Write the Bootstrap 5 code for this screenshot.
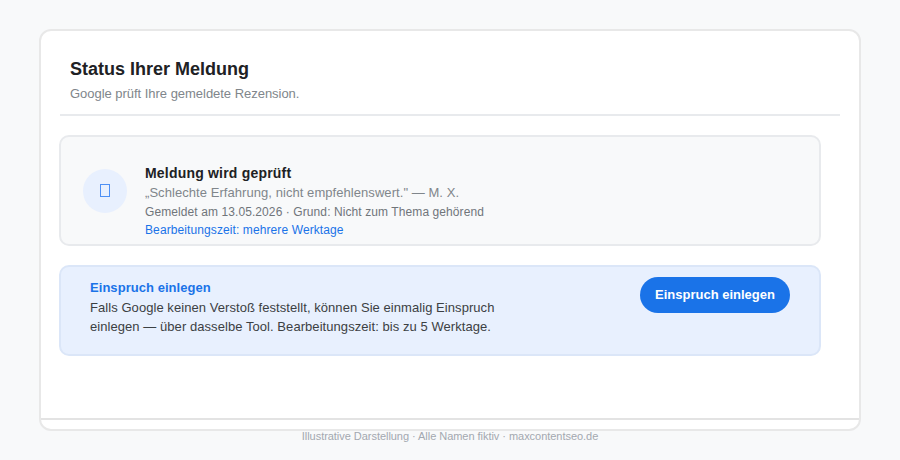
<!DOCTYPE html>
<html lang="de">
<head>
<meta charset="utf-8">
<title>Status Ihrer Meldung</title>
<link href="https://cdn.jsdelivr.net/npm/bootstrap@5.3.0/dist/css/bootstrap.min.css" rel="stylesheet">
<style>
html, body { height: 460px; overflow: hidden; }
body { background: #f8f9fa; font-family: "Liberation Sans", Arial, sans-serif; color: #202124; }
.frame { width: 822px; height: 402px; margin: 29px 0 0 39px; background: #fff; border: 2px solid #e8e8e8; border-radius: 12px; padding: 18px 18px 0 19px; }
.head { padding: 10px 10px 12px; border-bottom: 2px solid #e8eaed; height: 67px; margin-right: 1px; }
.head-title { font-size: 18px; line-height: 21px; font-weight: 700; margin: 0 0 6px; color: #202124; }
.head-sub { font-size: 13px; line-height: 15px; color: #80868b; margin: 0; letter-spacing: -.03px; }
.stack { width: 762px; margin-left: -1px; padding-top: 19px; gap: 19px; }
.state-box { height: 111px; background: #f8f9fa; border: 2px solid #e8eaed; border-radius: 10px; padding: 0 21px 0 22px; gap: 18px; }
.disc { width: 44px; height: 44px; background: #e8f0fe; border-radius: 50%; flex: none; }
.tofu { width: 10px; height: 13px; border: 1px solid #4d90f5; }
.state-text { padding-top: 27px; }
.state-title { font-size: 14px; line-height: 19px; font-weight: 700; letter-spacing: .2px; margin: 0; }
.state-quote { font-size: 13px; line-height: 19px; color: #80868b; margin: 0; letter-spacing: .06px; }
.state-meta { font-size: 12px; line-height: 19px; color: #70757a; margin: 1px 0 0; letter-spacing: .09px; }
.state-time { font-size: 12px; line-height: 18px; color: #1a73e8; margin: -1px 0 0; letter-spacing: .1px; }
.appeal { height: 91px; background: #e8f0fe; border: 2px solid #dbe6f8; border-radius: 10px; padding: 10px 29px 0; }
.appeal-title { font-size: 13px; line-height: 18px; font-weight: 700; color: #1a73e8; margin: 2px 0 1px; letter-spacing: .05px; }
.appeal-text { width: 430px; font-size: 13px; line-height: 19px; color: #3c4043; margin: 0; letter-spacing: .06px; }
.appeal-btn { width: 150px; height: 36px; padding: 0; background: #1a73e8; border: 0; color: #fff; font-size: 13px; font-weight: 700; }
.appeal-btn:hover { background: #1a73e8; color: #fff; }
.bottom-line { border-top: 2px solid #e3e3e3; margin: 0 -18px 0 -19px; }
.main-area { height: 369px; }
.note { font-size: 11px; line-height: 13px; color: #a3a8b0; text-align: center; margin-top: -1px; letter-spacing: -.04px; }
</style>
</head>
<body>
<div class="frame d-flex flex-column">
  <div class="main-area">
    <div class="head">
      <h1 class="head-title">Status Ihrer Meldung</h1>
      <p class="head-sub">Google prüft Ihre gemeldete Rezension.</p>
    </div>
    <div class="stack d-flex flex-column">
      <div class="state-box d-flex align-items-center">
        <div class="disc d-flex align-items-center justify-content-center"><span class="tofu"></span></div>
        <div class="state-text align-self-start">
          <p class="state-title">Meldung wird geprüft</p>
          <p class="state-quote">„Schlechte Erfahrung, nicht empfehlenswert." — M. X.</p>
          <p class="state-meta">Gemeldet am 13.05.2026 · Grund: Nicht zum Thema gehörend</p>
          <p class="state-time">Bearbeitungszeit: mehrere Werktage</p>
        </div>
      </div>
      <div class="appeal d-flex justify-content-between align-items-start">
        <div>
          <p class="appeal-title">Einspruch einlegen</p>
          <p class="appeal-text">Falls Google keinen Verstoß feststellt, können Sie einmalig Einspruch einlegen — über dasselbe Tool. Bearbeitungszeit: bis zu 5 Werktage.</p>
        </div>
        <button type="button" class="btn rounded-pill appeal-btn">Einspruch einlegen</button>
      </div>
    </div>
  </div>
  <div class="bottom-line flex-grow-1"></div>
</div>
<p class="note">Illustrative Darstellung · Alle Namen fiktiv · maxcontentseo.de</p>
<script src="https://cdn.jsdelivr.net/npm/bootstrap@5.3.0/dist/js/bootstrap.bundle.min.js"></script>
</body>
</html>
